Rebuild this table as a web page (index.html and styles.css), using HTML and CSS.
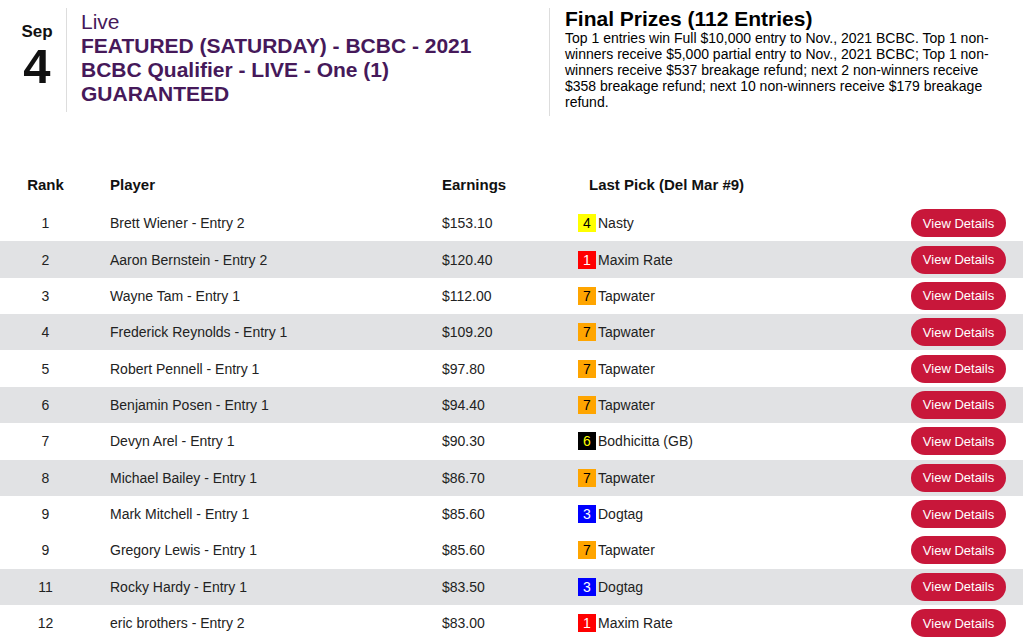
FILE: index.html
```html
<!DOCTYPE html>
<html>
<head>
<meta charset="utf-8">
<link rel="stylesheet" href="styles.css">
</head>
<body>
<header class="top">
  <div class="date">
    <div class="month">Sep</div>
    <div class="day">4</div>
  </div>
  <div class="title">
    <div class="status">Live</div>
    <div class="name">FEATURED (SATURDAY) - BCBC - 2021 BCBC Qualifier - LIVE - One (1) GUARANTEED</div>
  </div>
  <div class="prizes">
    <h2>Final Prizes (112 Entries)</h2>
    <p>Top 1 entries win Full $10,000 entry to Nov., 2021 BCBC. Top 1 non-winners receive $5,000 partial entry to Nov., 2021 BCBC; Top 1 non-winners receive $537 breakage refund; next 2 non-winners receive $358 breakage refund; next 10 non-winners receive $179 breakage refund.</p>
  </div>
</header>

<div class="board">
  <div class="row head">
    <div class="c-rank">Rank</div>
    <div class="c-player">Player</div>
    <div class="c-earn">Earnings</div>
    <div class="c-pick">Last Pick (Del Mar #9)</div>
    <div class="c-btn"></div>
  </div>
  <div class="row">
    <div class="c-rank">1</div><div class="c-player">Brett Wiener - Entry 2</div><div class="c-earn">$153.10</div>
    <div class="c-pick"><span class="pp yellow">4</span>Nasty</div><div class="c-btn"><button class="btn">View Details</button></div>
  </div>
  <div class="row alt">
    <div class="c-rank">2</div><div class="c-player">Aaron Bernstein - Entry 2</div><div class="c-earn">$120.40</div>
    <div class="c-pick"><span class="pp red">1</span>Maxim Rate</div><div class="c-btn"><button class="btn">View Details</button></div>
  </div>
  <div class="row">
    <div class="c-rank">3</div><div class="c-player">Wayne Tam - Entry 1</div><div class="c-earn">$112.00</div>
    <div class="c-pick"><span class="pp orange">7</span>Tapwater</div><div class="c-btn"><button class="btn">View Details</button></div>
  </div>
  <div class="row alt">
    <div class="c-rank">4</div><div class="c-player">Frederick Reynolds - Entry 1</div><div class="c-earn">$109.20</div>
    <div class="c-pick"><span class="pp orange">7</span>Tapwater</div><div class="c-btn"><button class="btn">View Details</button></div>
  </div>
  <div class="row">
    <div class="c-rank">5</div><div class="c-player">Robert Pennell - Entry 1</div><div class="c-earn">$97.80</div>
    <div class="c-pick"><span class="pp orange">7</span>Tapwater</div><div class="c-btn"><button class="btn">View Details</button></div>
  </div>
  <div class="row alt">
    <div class="c-rank">6</div><div class="c-player">Benjamin Posen - Entry 1</div><div class="c-earn">$94.40</div>
    <div class="c-pick"><span class="pp orange">7</span>Tapwater</div><div class="c-btn"><button class="btn">View Details</button></div>
  </div>
  <div class="row">
    <div class="c-rank">7</div><div class="c-player">Devyn Arel - Entry 1</div><div class="c-earn">$90.30</div>
    <div class="c-pick"><span class="pp black">6</span>Bodhicitta (GB)</div><div class="c-btn"><button class="btn">View Details</button></div>
  </div>
  <div class="row alt">
    <div class="c-rank">8</div><div class="c-player">Michael Bailey - Entry 1</div><div class="c-earn">$86.70</div>
    <div class="c-pick"><span class="pp orange">7</span>Tapwater</div><div class="c-btn"><button class="btn">View Details</button></div>
  </div>
  <div class="row">
    <div class="c-rank">9</div><div class="c-player">Mark Mitchell - Entry 1</div><div class="c-earn">$85.60</div>
    <div class="c-pick"><span class="pp blue">3</span>Dogtag</div><div class="c-btn"><button class="btn">View Details</button></div>
  </div>
  <div class="row">
    <div class="c-rank">9</div><div class="c-player">Gregory Lewis - Entry 1</div><div class="c-earn">$85.60</div>
    <div class="c-pick"><span class="pp orange">7</span>Tapwater</div><div class="c-btn"><button class="btn">View Details</button></div>
  </div>
  <div class="row alt">
    <div class="c-rank">11</div><div class="c-player">Rocky Hardy - Entry 1</div><div class="c-earn">$83.50</div>
    <div class="c-pick"><span class="pp blue">3</span>Dogtag</div><div class="c-btn"><button class="btn">View Details</button></div>
  </div>
  <div class="row">
    <div class="c-rank">12</div><div class="c-player">eric brothers - Entry 2</div><div class="c-earn">$83.00</div>
    <div class="c-pick"><span class="pp red">1</span>Maxim Rate</div><div class="c-btn"><button class="btn">View Details</button></div>
  </div>
</div>
</body>
</html>
```

FILE: styles.css
```css
html, body {
  margin: 0;
  padding: 0;
  background: #fff;
  font-family: "Liberation Sans", Arial, sans-serif;
  color: #222;
}

.top {
  display: flex;
  align-items: flex-start;
  padding-top: 8px;
  height: 148px;
  box-sizing: border-box;
}

.date {
  width: 66px;
  padding-left: 8px;
  box-sizing: border-box;
  display: flex;
  flex-direction: column;
  align-items: center;
  padding-top: 15px;
  color: #111;
}
.month {
  font-size: 17px;
  font-weight: bold;
  line-height: 18px;
}
.day {
  font-size: 49px;
  font-weight: bold;
  line-height: 50px;
}

.title {
  width: 483px;
  box-sizing: border-box;
  border-left: 1px solid #ddd;
  padding: 2px 30px 6px 14px;
  color: #46195a;
  font-size: 21px;
  line-height: 24px;
  min-height: 97px;
}
.status {
  font-weight: normal;
}
.name {
  font-weight: bold;
}

.prizes {
  flex: 1;
  border-left: 1px solid #ddd;
  padding: 0 24px 6px 15px;
  min-height: 94px;
  color: #000;
}
.prizes h2 {
  margin: 0;
  font-size: 21px;
  line-height: 22px;
  font-weight: bold;
}
.prizes p {
  margin: 0;
  font-size: 14px;
  line-height: 16px;
}

.board {
  padding-top: 16px;
}
.row {
  display: grid;
  grid-template-columns: 91px 351px 136px 1fr 114px;
  align-items: center;
  height: 36.36px;
  font-size: 14px;
}
.row.alt {
  background: #e1e2e4;
}
.row.head {
  height: 41px;
  font-size: 15px;
  font-weight: bold;
  color: #111;
}
.c-rank {
  text-align: center;
}
.c-player {
  padding-left: 19px;
}
.head .c-pick {
  padding-left: 11px;
}
.c-pick {
  display: flex;
  align-items: center;
}
.pp {
  display: inline-block;
  width: 18px;
  height: 18px;
  line-height: 18px;
  text-align: center;
  font-size: 14px;
  margin-right: 2px;
}
.yellow { background: #ffff00; color: #000; }
.red { background: #ff0000; color: #fff; }
.orange { background: #ffa500; color: #000; }
.black { background: #000; color: #ffff00; }
.blue { background: #0000ff; color: #fff; }

.c-btn {
  padding-right: 17px;
  display: flex;
  justify-content: flex-end;
}
.btn {
  background: #c8173a;
  color: #fff;
  border: none;
  border-radius: 14px;
  width: 95px;
  height: 28px;
  font-family: "Liberation Sans", Arial, sans-serif;
  font-size: 13px;
  padding: 0;
}
```
